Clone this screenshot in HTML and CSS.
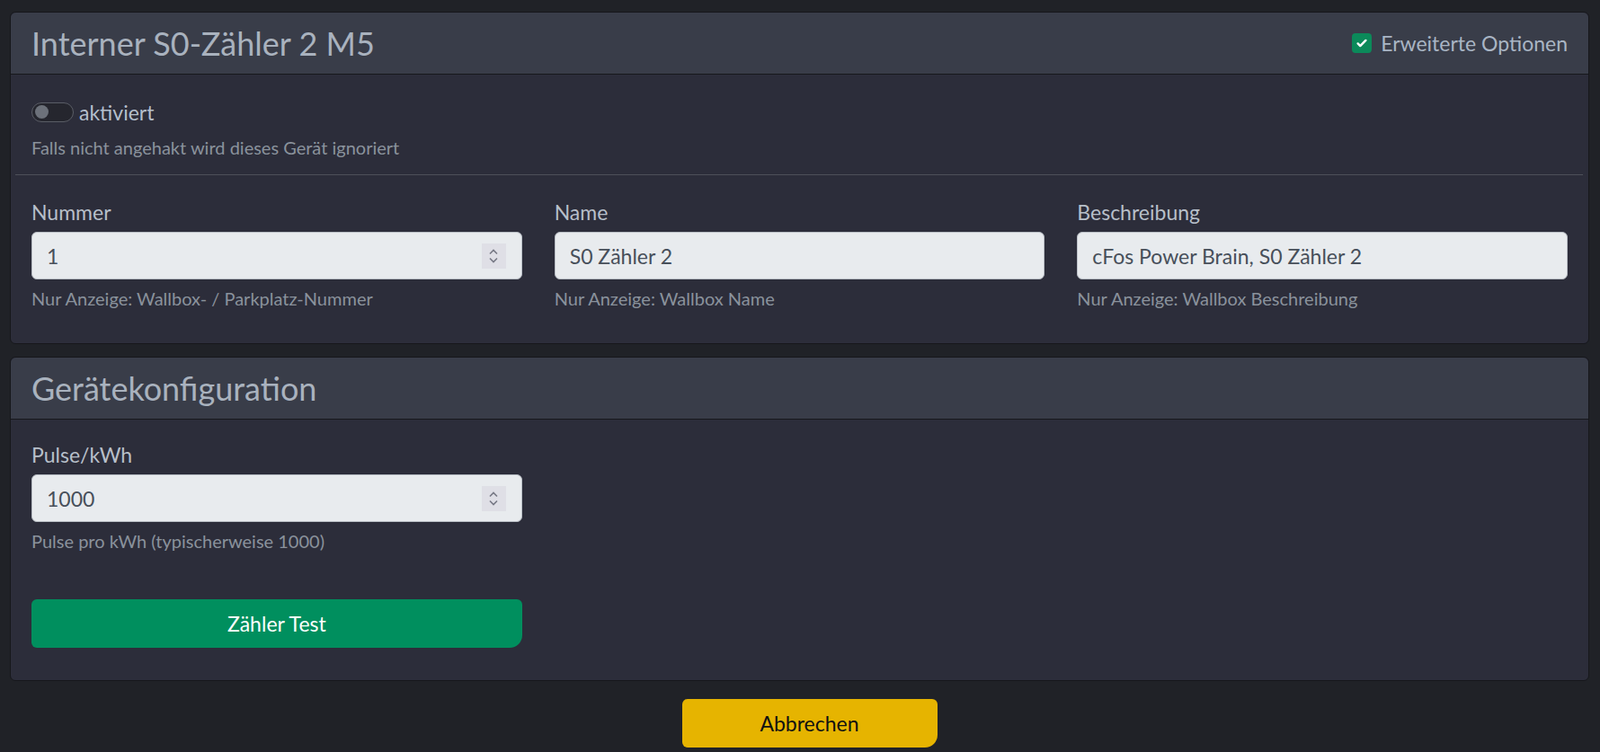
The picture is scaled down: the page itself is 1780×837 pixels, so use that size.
FILE: index.html
```html
<!doctype html>
<html lang="de">

<head>
    <meta charset="UTF-8" />
    <meta name="viewport" content="width=device-width, initial-scale=1.0" />
    <title>Interner S0-Zähler 2 M5</title>
    <link rel="stylesheet" href="styles.css">
</head>

<body>

    <div class="card">
        <div class="card-header">
            <h3>Interner S0-Zähler 2 M5</h3>
            <label class="check">
                <span class="check-box">
                    <svg viewBox="0 0 16 16" width="14" height="14">
                        <path d="M3 8.5l3 3 7-7" fill="none" stroke="#fff" stroke-width="2.8" stroke-linecap="round" stroke-linejoin="round" />
                    </svg>
                </span>
                Erweiterte Optionen
            </label>
        </div>
        <div class="card-body">
            <label class="switch">
                <span class="switch-track"><span class="switch-knob"></span></span>
                aktiviert
            </label>
            <div class="form-text first">Falls nicht angehakt wird dieses Gerät ignoriert</div>
            <hr>
            <div class="row">
                <div class="col">
                    <label class="form-label" for="nummer">Nummer</label>
                    <div class="num-field">
                        <input type="number" id="nummer" value="1">
                        <span class="spin">
                            <svg viewBox="0 0 12 18" width="12" height="18">
                                <path d="M2 6.5L6 2.5l4 4M2 11.5L6 15.5l4-4" fill="none" stroke="#777985" stroke-width="1.6" />
                            </svg>
                        </span>
                    </div>
                    <div class="form-text">Nur Anzeige: Wallbox- / Parkplatz-Nummer</div>
                </div>
                <div class="col">
                    <label class="form-label" for="name">Name</label>
                    <input type="text" class="form-control" id="name" value="S0 Zähler 2">
                    <div class="form-text">Nur Anzeige: Wallbox Name</div>
                </div>
                <div class="col">
                    <label class="form-label" for="beschreibung">Beschreibung</label>
                    <input type="text" class="form-control" id="beschreibung" value="cFos Power Brain, S0 Zähler 2">
                    <div class="form-text">Nur Anzeige: Wallbox Beschreibung</div>
                </div>
            </div>
        </div>
    </div>

    <div class="card">
        <div class="card-header">
            <h3>Gerätekonfiguration</h3>
        </div>
        <div class="card-body config">
            <div class="row">
                <div class="col">
                    <label class="form-label" for="pulse">Pulse/kWh</label>
                    <div class="num-field">
                        <input type="number" id="pulse" value="1000">
                        <span class="spin">
                            <svg viewBox="0 0 12 18" width="12" height="18">
                                <path d="M2 6.5L6 2.5l4 4M2 11.5L6 15.5l4-4" fill="none" stroke="#777985" stroke-width="1.6" />
                            </svg>
                        </span>
                    </div>
                    <div class="form-text">Pulse pro kWh (typischerweise 1000)</div>
                    <button class="btn btn-green">Zähler Test</button>
                </div>
                <div class="col"></div>
                <div class="col"></div>
            </div>
        </div>
    </div>

    <div class="actions">
        <button class="btn btn-yellow">Abbrechen</button>
    </div>

</body>

</html>
```

FILE: styles.css
```css
body {
    margin: 0;
    padding: 13px 12px 0 11px;
    background: #202227;
    font-family: Lato, "Noto Sans", sans-serif;
    font-size: 23px;
    color: #b7bfc9;
}

.card {
    background: #2c2d3a;
    border: 1px solid #16171b;
    border-radius: 6px;
    margin-bottom: 14px;
}

.card-header {
    display: flex;
    align-items: center;
    justify-content: space-between;
    height: 68px;
    padding: 0 23px;
    background: #393d49;
    border-bottom: 1px solid #17181c;
    border-radius: 6px 6px 0 0;
}

h3 {
    margin: 0;
    font-size: 36px;
    font-weight: 400;
    color: #a9b2be;
}

.check {
    display: flex;
    align-items: center;
    gap: 10px;
    color: #a9b5c4;
    font-size: 23px;
}

.check-box {
    width: 22px;
    height: 22px;
    border-radius: 4px;
    background: #0b8a5a;
    display: flex;
    align-items: center;
    justify-content: center;
}

.card-body {
    padding: 25px 23px 35px;
}

.switch {
    display: flex;
    align-items: center;
    gap: 6px;
    height: 33px;
    color: #b4bfcc;
}

.switch-track {
    width: 42px;
    height: 20px;
    border: 1px solid #5a5d66;
    border-radius: 12px;
    background: #25262e;
    display: flex;
    align-items: center;
    padding-left: 3px;
}

.switch-knob {
    width: 15px;
    height: 15px;
    border-radius: 50%;
    background: #6c717a;
}

.form-text {
    font-size: 20px;
    line-height: 29px;
    color: #8a929c;
    margin-top: 7px;
}

.form-text.first {
    margin-top: 9px;
}

hr {
    border: none;
    border-top: 1px solid #4e5059;
    margin: 15px -17px 25px -18px;
}

.row {
    display: grid;
    grid-template-columns: 1fr 1fr 1fr;
    column-gap: 36px;
}

.form-label {
    display: block;
    line-height: 33px;
    margin-bottom: 5px;
}

.form-control,
.num-field {
    box-sizing: border-box;
    width: 100%;
    height: 53px;
    background: #e8ebee;
    border: 1px solid #b9bec5;
    border-radius: 6px;
    font-family: inherit;
    font-size: 23px;
    color: #474f5a;
}

.form-control {
    padding: 0 16px;
}

.num-field {
    display: flex;
    align-items: center;
    padding: 0 17px 0 16px;
}

.num-field input {
    flex: 1;
    border: none;
    background: transparent;
    font-family: inherit;
    font-size: 23px;
    color: #474f5a;
    padding: 0;
    outline: none;
    -moz-appearance: textfield;
}

.num-field input::-webkit-inner-spin-button,
.num-field input::-webkit-outer-spin-button {
    -webkit-appearance: none;
    margin: 0;
}

.spin {
    width: 27px;
    height: 28px;
    background: #dfdfe6;
    display: flex;
    align-items: center;
    justify-content: center;
}

.btn {
    border: none;
    height: 54px;
    font-family: inherit;
    font-size: 23px;
    border-radius: 6px 6px 14px 6px;
    cursor: pointer;
}

.btn-green {
    width: 100%;
    margin-top: 50px;
    background: #008f5e;
    color: #fff;
}

.config {
    padding-top: 23px;
    padding-bottom: 36px;
}

.actions {
    display: flex;
    justify-content: center;
    padding: 6px 0 0 22px;
}

.btn-yellow {
    width: 284px;
    background: #e6b400;
    color: #111;
}
```
